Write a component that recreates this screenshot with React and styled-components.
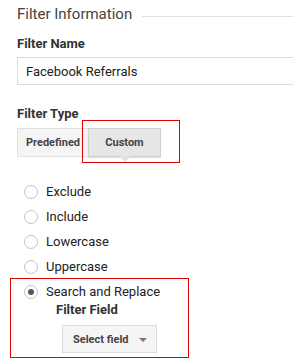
import React from "react"
import styled, { createGlobalStyle } from "styled-components"

const GlobalStyle = createGlobalStyle`
    body {
        margin: 0;
        background: #fff;
        font-family: Roboto, "Liberation Sans", Arial, sans-serif;
        color: #333;
        overflow: hidden;
    }
`

const Page = styled.div`
    width: 293px;
    height: 361px;
    padding-left: 17px;
    box-sizing: border-box;
    overflow: hidden;
`

const Legend = styled.div`
    display: flex;
    align-items: center;
    gap: 10px;
    height: 28px;
`

const LegendText = styled.span`
    font-size: 15px;
    color: #444;
    white-space: nowrap;
`

const LegendLine = styled.div`
    flex: 1;
    height: 1px;
    margin-top: 4px;
    background: #e0e0e0;
`

const Label = styled.div`
    font-size: 13px;
    font-weight: 700;
    color: #333;
    line-height: 16px;
    margin-top: ${p => p.$top || 0}px;
    margin-left: ${p => p.$indent || 0}px;
`

const TextInput = styled.div`
    margin-top: 5px;
    width: 300px;
    height: 28px;
    box-sizing: border-box;
    border: 1px solid #dcdcdc;
    padding-left: 8px;
    display: flex;
    align-items: center;
    font-size: 13px;
    color: #222;
`

const ButtonGroup = styled.div`
    display: flex;
    margin-top: 6px;
    position: relative;
    width: fit-content;
`

const ToggleButton = styled.div`
    position: relative;
    height: 29px;
    width: ${p => p.$w}px;
    box-sizing: border-box;
    display: flex;
    align-items: center;
    justify-content: center;
    font-size: 11px;
    font-weight: 700;
    color: #444;
    border: 1px solid ${p => (p.$active ? "#d0d0d0" : "#e0e0e0")};
    background: ${p => (p.$active ? "#e6e6e6" : "#f5f5f5")};
    box-shadow: ${p => (p.$active ? "0 1px 1px rgba(0,0,0,0.12)" : "none")};
    & + & {
        margin-left: -1px;
    }
`

const Pointer = styled.span`
    position: absolute;
    left: 50%;
    bottom: -6px;
    margin-left: -6px;
    width: 0;
    height: 0;
    border-left: 6px solid transparent;
    border-right: 6px solid transparent;
    border-top: 6px solid #e0e0e0;
`

const Highlight = styled.div`
    position: absolute;
    left: 65px;
    top: -8px;
    width: 98px;
    height: 43px;
    border: 1px solid #e00000;
    box-sizing: border-box;
    pointer-events: none;
`

const RadioList = styled.div`
    margin-top: 22px;
    display: flex;
    flex-direction: column;
`

const RadioRow = styled.div`
    display: flex;
    align-items: center;
    height: 25px;
    padding-left: 7px;
    gap: 8px;
    font-size: 13px;
    color: #222;
`

const Circle = styled.span`
    width: 14px;
    height: 14px;
    box-sizing: border-box;
    border-radius: 50%;
    border: 1px solid #c4c4c4;
    background: #fff;
    display: flex;
    align-items: center;
    justify-content: center;
    &::after {
        content: "";
        width: 6px;
        height: 6px;
        border-radius: 50%;
        background: ${p => (p.$checked ? "#555" : "transparent")};
    }
`

const Boxed = styled.div`
    margin-left: -7px;
    margin-top: -1px;
    width: 179px;
    height: 80px;
    box-sizing: border-box;
    border: 1px solid #e00000;
    padding: 0 0 0 6px;
`

const SelectButton = styled.div`
    margin-top: 7px;
    margin-left: 45px;
    width: 95px;
    height: 28px;
    box-sizing: border-box;
    display: flex;
    align-items: center;
    justify-content: space-between;
    padding: 0 9px 0 10px;
    white-space: nowrap;
    font-size: 11px;
    font-weight: 700;
    color: #444;
    background: #f5f5f5;
    border: 1px solid #dcdcdc;
`

const Caret = styled.span`
    width: 0;
    height: 0;
    margin-top: 2px;
    border-left: 4px solid transparent;
    border-right: 4px solid transparent;
    border-top: 4px solid #777;
`

const options = ["Exclude", "Include", "Lowercase", "Uppercase"]

function App() {
    return (
        <>
            <GlobalStyle />
            <Page>
                <Legend>
                    <LegendText>Filter Information</LegendText>
                    <LegendLine />
                </Legend>

                <Label $top={8}>Filter Name</Label>
                <TextInput>Facebook Referrals</TextInput>

                <Label $top={21}>Filter Type</Label>
                <ButtonGroup>
                    <ToggleButton $w={72}>Predefined</ToggleButton>
                    <ToggleButton $w={73} $active>
                        Custom
                        <Pointer />
                    </ToggleButton>
                    <Highlight />
                </ButtonGroup>

                <RadioList>
                    {options.map(o => (
                        <RadioRow key={o}>
                            <Circle />
                            {o}
                        </RadioRow>
                    ))}
                    <Boxed>
                        <RadioRow>
                            <Circle $checked />
                            Search and Replace
                        </RadioRow>
                        <Label $top={-2} $indent={39}>Filter Field</Label>
                        <SelectButton>
                            Select field
                            <Caret />
                        </SelectButton>
                    </Boxed>
                </RadioList>
            </Page>
        </>
    )
}

export default App
